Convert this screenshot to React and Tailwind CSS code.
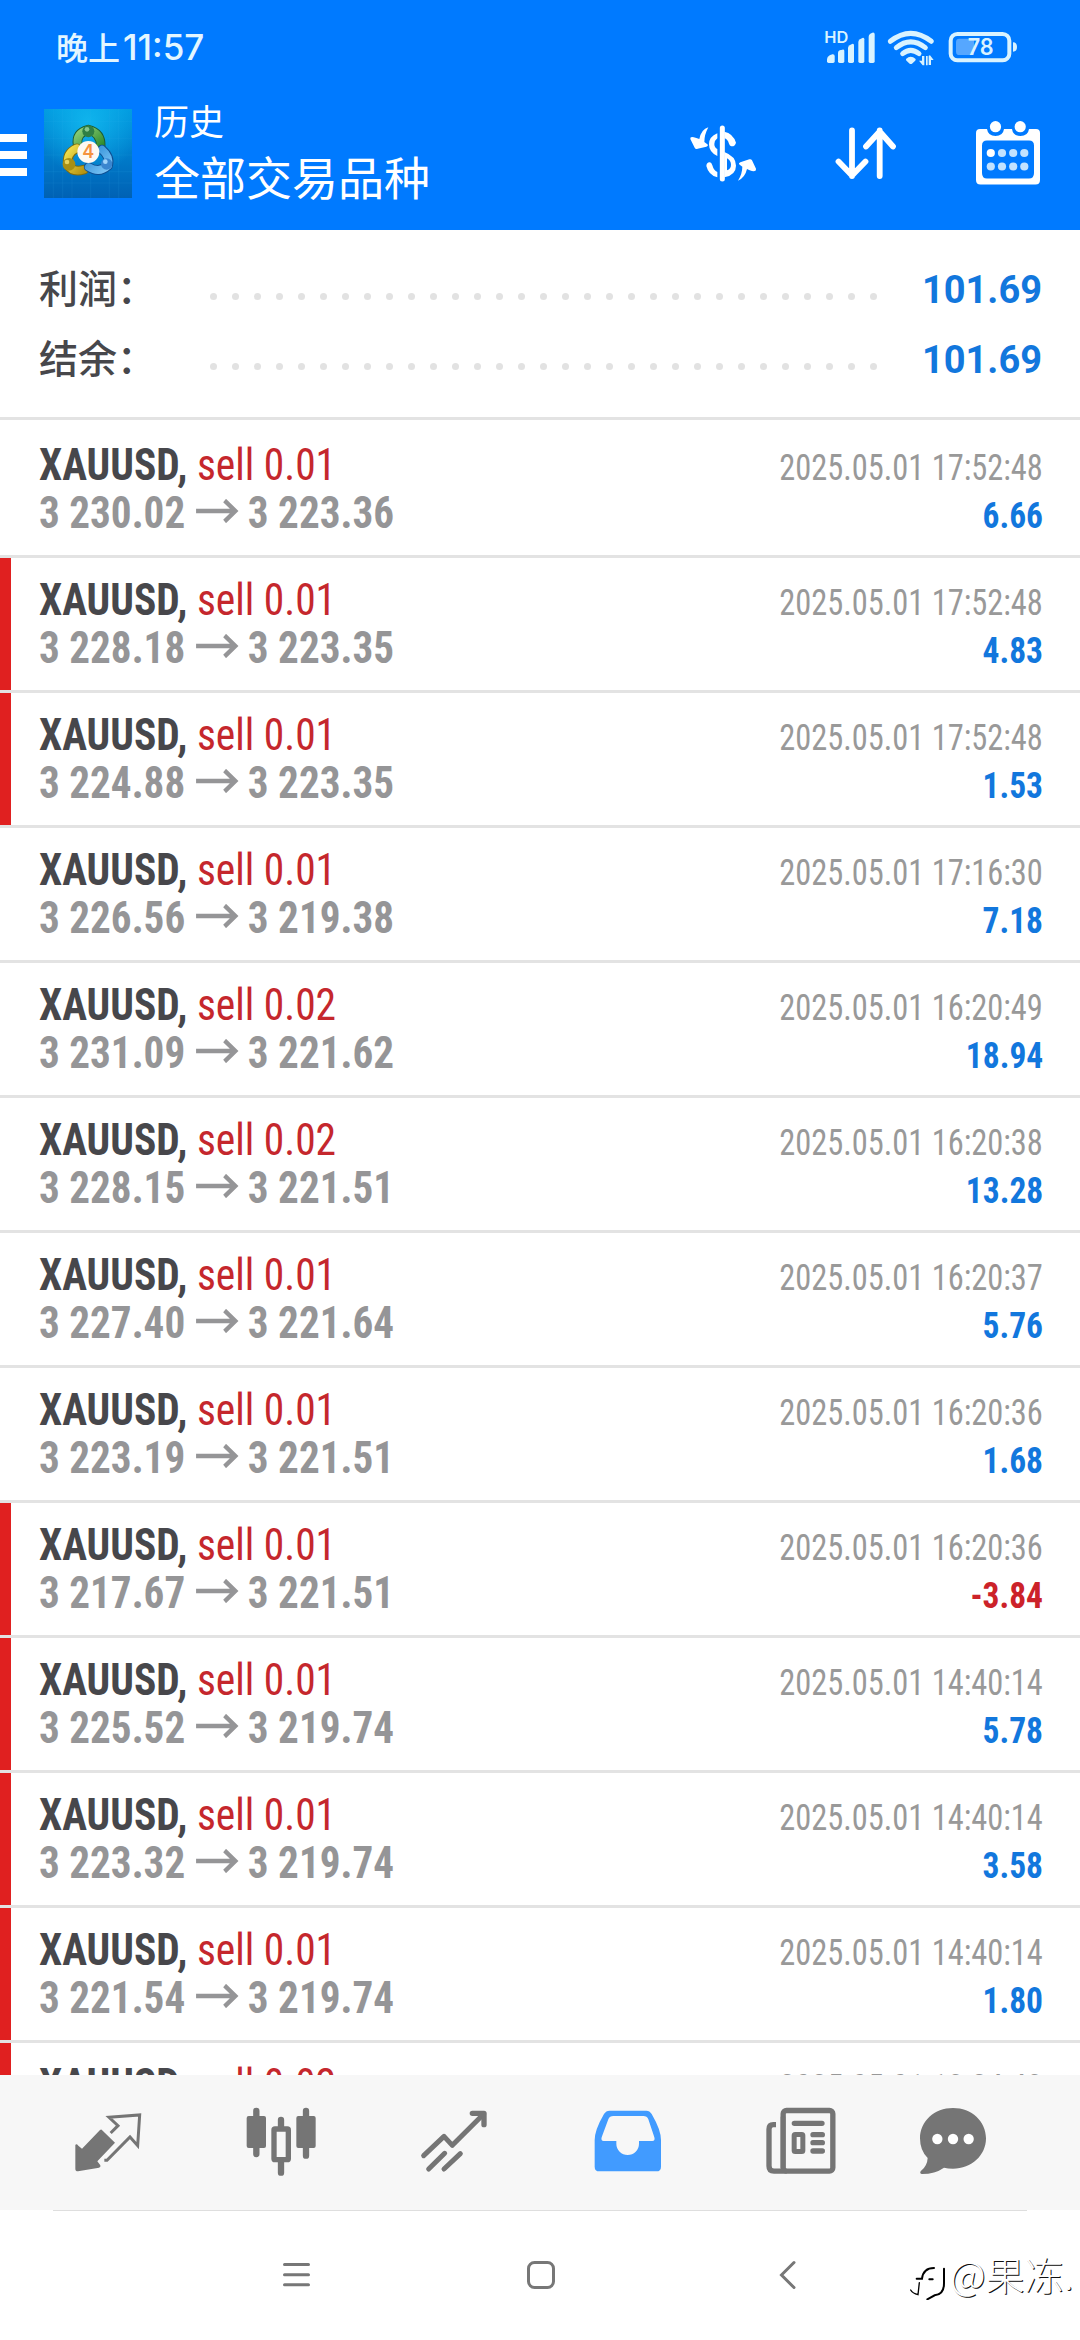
const deals = [
  { lots: '0.01', from: '3 230.02', to: '3 223.36', time: '2025.05.01 17:52:48', profit: '6.66', marked: false },
  { lots: '0.01', from: '3 228.18', to: '3 223.35', time: '2025.05.01 17:52:48', profit: '4.83', marked: true },
  { lots: '0.01', from: '3 224.88', to: '3 223.35', time: '2025.05.01 17:52:48', profit: '1.53', marked: true },
  { lots: '0.01', from: '3 226.56', to: '3 219.38', time: '2025.05.01 17:16:30', profit: '7.18', marked: false },
  { lots: '0.02', from: '3 231.09', to: '3 221.62', time: '2025.05.01 16:20:49', profit: '18.94', marked: false },
  { lots: '0.02', from: '3 228.15', to: '3 221.51', time: '2025.05.01 16:20:38', profit: '13.28', marked: false },
  { lots: '0.01', from: '3 227.40', to: '3 221.64', time: '2025.05.01 16:20:37', profit: '5.76', marked: false },
  { lots: '0.01', from: '3 223.19', to: '3 221.51', time: '2025.05.01 16:20:36', profit: '1.68', marked: false },
  { lots: '0.01', from: '3 217.67', to: '3 221.51', time: '2025.05.01 16:20:36', profit: '-3.84', marked: true },
  { lots: '0.01', from: '3 225.52', to: '3 219.74', time: '2025.05.01 14:40:14', profit: '5.78', marked: true },
  { lots: '0.01', from: '3 223.32', to: '3 219.74', time: '2025.05.01 14:40:14', profit: '3.58', marked: true },
  { lots: '0.01', from: '3 221.54', to: '3 219.74', time: '2025.05.01 14:40:14', profit: '1.80', marked: true },
  { lots: '0.02', from: '3 223.10', to: '3 219.74', time: '2025.05.01 13:24:43', profit: '6.72', marked: true },
]

function StatusIcons() {
  return (
    <svg width="210" height="55" viewBox="0 0 630 165" fill="#d9f3ff">
      <text x="28" y="69" fontFamily="Inter, sans-serif" fontWeight="600" fontSize="46" textLength="72" lengthAdjust="spacingAndGlyphs">HD</text>
      <path d="M36 118q0-8 8-12l8-3q7-1 7 5v16q0 5-5 5H41q-5 0-5-5z" />
      <path d="M69 98q0-5 5-7l8-2q6-1 6 4v31q0 5-5 5h-9q-5 0-5-5z" />
      <path d="M99 84q0-5 5-8l7-4q6-2 6 4v48q0 5-5 5h-8q-5 0-5-5z" />
      <path d="M130 66q0-5 5-8l7-4q6-2 6 4v66q0 5-5 5h-8q-5 0-5-5z" />
      <path d="M161 50q0-6 5-9l6-3q7-2 7 5v81q0 5-5 5h-8q-5 0-5-5z" />
      <g fill="none" stroke="#d9f3ff" strokeWidth="15" strokeLinecap="round">
        <path d="M226 64Q287 16 349 64" />
        <path d="M244 83Q287 48 331 83" />
        <path d="M263 101Q287 81 312 101" />
      </g>
      <path d="M273 117q14-13 29 0q1 4-3 7l-8 7q-3 2-7 0l-8-7q-4-3-3-7z" />
      <path d="M312 122h9v-14h7v28h-5zM345 106l11 14h-8v15h-7v-28zM333 108h5v28h-5z" />
      <rect x="407" y="42" width="176" height="79" rx="20" fill="none" stroke="#d9f3ff" strokeWidth="12" />
      <path d="M433 56h44v49h-44q-10 0-10-10V66q0-10 10-10z" fill="#56a7ff" />
      <text x="458" y="106" fontFamily="Inter, sans-serif" fontWeight="600" fontSize="68" textLength="78" lengthAdjust="spacingAndGlyphs">78</text>
      <path d="M594 67q12 0 12 14t-12 14z" />
    </svg>
  )
}

function AppLogo() {
  return (
    <svg className="ml-[17px]" width="88" height="89" viewBox="0 0 264 267">
      <defs>
        <linearGradient id="logoBg" x1="0" y1="0" x2="0" y2="1">
          <stop offset="0" stopColor="#0098de" />
          <stop offset="0.5" stopColor="#007dcb" />
          <stop offset="1" stopColor="#0061b4" />
        </linearGradient>
        <radialGradient id="logoGlow" cx="0.5" cy="0.15" r="0.6">
          <stop offset="0" stopColor="#14bdf2" stopOpacity="0.8" />
          <stop offset="1" stopColor="#14bdf2" stopOpacity="0" />
        </radialGradient>
        <linearGradient id="logoGreen" x1="0" y1="0" x2="1" y2="1">
          <stop offset="0" stopColor="#8fd07a" />
          <stop offset="1" stopColor="#2f8b2c" />
        </linearGradient>
        <linearGradient id="logoGold" x1="0" y1="0" x2="1" y2="1">
          <stop offset="0" stopColor="#f2e14e" />
          <stop offset="1" stopColor="#b79412" />
        </linearGradient>
        <linearGradient id="logoBlue" x1="0" y1="0" x2="1" y2="1">
          <stop offset="0" stopColor="#2b8bd6" />
          <stop offset="1" stopColor="#7cc5f5" />
        </linearGradient>
      </defs>
      <rect width="264" height="267" fill="url(#logoBg)" />
      <rect width="264" height="267" fill="url(#logoGlow)" />
      <path d="M28 0v267M56 0v267M84 0v267M140 0v267M196 0v267M224 0v267M0 38h264M0 88h264M0 138h264M0 188h264M0 222h264" stroke="#3fb4ea" strokeOpacity="0.16" strokeWidth="2" fill="none" />
      <g fill="none" strokeLinecap="round">
        <path d="M101 108Q95 72 133 62Q172 72 170 112" stroke="#1d5d34" strokeWidth="29" />
        <path d="M101 108Q95 72 133 62Q172 72 170 112" stroke="url(#logoGreen)" strokeWidth="23" />
        <path d="M98 118Q66 132 72 168Q86 192 120 182" stroke="#7d6c10" strokeWidth="29" />
        <path d="M98 118Q66 132 72 168Q86 192 120 182" stroke="url(#logoGold)" strokeWidth="23" />
        <path d="M174 122Q200 144 192 170Q166 194 134 174" stroke="#0f4f93" strokeWidth="29" />
        <path d="M174 122Q200 144 192 170Q166 194 134 174" stroke="url(#logoBlue)" strokeWidth="23" />
      </g>
      <circle cx="133" cy="67" r="18" fill="#2f7f45" />
      <circle cx="129" cy="61" r="7" fill="#86c690" />
      <circle cx="75" cy="166" r="19" fill="#a88f14" />
      <circle cx="69" cy="159" r="7" fill="#e6d35c" />
      <circle cx="188" cy="165" r="17" fill="#3a86cf" />
      <circle cx="184" cy="158" r="7" fill="#9fd4fa" />
      <circle cx="133" cy="129" r="33" fill="#fdf8f2" />
      <text x="133" y="148" textAnchor="middle" fontFamily="Inter, sans-serif" fontWeight="600" fontSize="54" fill="#f5923e">4</text>
    </svg>
  )
}

function CurrencyIcon() {
  return (
    <svg className="ml-auto" width="90" height="75" viewBox="0 0 270 225" fill="#fff">
      <path d="M124 36V189" stroke="#fff" strokeWidth="15" strokeLinecap="round" />
      <path d="M109 52V67Q100 74 100 84Q100 95 109 99V120Q84 109 84 85Q84 62 109 52z" />
      <path d="M130 47Q156 52 165 80Q162 92 151 91Q146 90 144 83Q140 69 130 67z" />
      <path fillRule="evenodd" d="M130 108Q165 121 165 149Q165 177 130 184zM138 127V163Q150 159 150 146Q150 134 138 127z" />
      <path d="M109 184Q83 178 76 150Q77 138 87 139Q92 140 94 148Q98 163 109 168z" />
      <path d="M82 34Q61 40 55 69L46 66Q26 58 28 69L41 95Q44 101 50 98L76 92Q85 88 77 83L70 78Q70 56 82 34z" />
      <path d="M171 194Q192 185 198 159L206 163Q226 170 225 158L213 133Q210 128 205 130L178 139Q170 143 177 147L184 152Q184 173 171 194z" />
    </svg>
  )
}

function SortIcon() {
  return (
    <svg className="ml-[59px]" width="72" height="60" viewBox="0 0 72 60" fill="none" stroke="#fff" strokeWidth="5.8" strokeLinecap="round" strokeLinejoin="round">
      <path d="M22 7.500V53M8.500 38.500L22 52.500L35.500 38.500" />
      <path d="M49.700 53V7.500M36 23.500L49.700 8.500L63 23.500" />
    </svg>
  )
}

function CalendarIcon() {
  const columns = [14.8, 26, 37.200, 48.300]
  return (
    <svg className="ml-[74px] mr-[40px]" width="64" height="66" viewBox="0 0 64 66" fill="#fff">
      <path fillRule="evenodd" d="M4 9H11Q12 16 19.500 16Q27 16 28 9H36Q37 16 44.500 16Q52 16 53 9H60Q64 9 64 13V60Q64 64.500 59.500 64.500H4.500Q0 64.500 0 60V13Q0 9 4 9zM11 20.500Q6 20.500 6 25.500V53Q6 58.500 11 58.500H53Q58 58.500 58 53V25.500Q58 20.500 53 20.500z" />
      <circle cx="19.500" cy="6.700" r="5.600" />
      <circle cx="44.200" cy="6.700" r="5.600" />
      {columns.map((x, i) => (
        <g key={x}>
          <circle cx={x} cy="33" r="4.100" fill={i === 0 ? '#fff' : '#c2e2ff'} />
          <circle cx={x} cy="46.500" r="4.100" fill="#c2e2ff" />
        </g>
      ))}
    </svg>
  )
}

function Header() {
  return (
    <header className="h-[230px] shrink-0 bg-[#007aff] text-white">
      <div className="flex h-[88px] items-start justify-between pt-5 pl-[56px] pr-[55px]">
        <span className="mt-[2px] font-['Noto_Sans_CJK_SC',sans-serif] text-[32px] leading-[48px] font-medium text-[#e3f6ff]">
          晚上<span className="ml-[3px] font-[Inter] text-[35px]">11:57</span>
        </span>
        <StatusIcons />
      </div>
      <div className="flex h-[130px] items-center">
        <div className="mt-[4px] flex w-[27px] flex-col gap-[9px]">
          <i className="h-2 bg-white" />
          <i className="h-2 bg-white" />
          <i className="h-2 bg-white" />
        </div>
        <AppLogo />
        <div className="mb-[4px] ml-[22px] font-['Noto_Sans_CJK_SC',sans-serif]">
          <p className="text-[35px] leading-[48px]">历史</p>
          <h1 className="text-[46px] leading-[63px]">全部交易品种</h1>
        </div>
        <CurrencyIcon />
        <SortIcon />
        <CalendarIcon />
      </div>
    </header>
  )
}

function SummaryRow({ label, value }) {
  return (
    <div className="flex h-[70px] items-center pl-[39px] pr-[38px]">
      <span className="mb-[5px] w-[171px] font-['Noto_Sans_CJK_SC',sans-serif] text-[39px] font-medium text-[#47474b]">{label}</span>
      <span className="mt-[14px] flex w-[667px] justify-between">
        {Array.from({ length: 31 }, (_, i) => (
          <i key={i} className="size-[7px] rounded-full bg-[#e2e2e2]" />
        ))}
      </span>
      <span className="mt-[2px] ml-auto font-[Roboto] text-[38px] font-bold text-[#1277dd]">{value}</span>
    </div>
  )
}

function Deal({ deal, first }) {
  const loss = deal.profit.startsWith('-')
  return (
    <li className={first ? 'flex h-[135px] shrink-0 border-t-[3px] border-transparent' : 'flex h-[135px] shrink-0 border-t-[3px] border-[#e3e3e3]'}>
      <div className={deal.marked ? 'w-[11px] bg-[#e02020]' : 'w-[11px]'} />
      <div className="flex-1 pt-[18px] pl-7 pr-[37px] font-['Roboto_Condensed'] leading-[48px]">
        <div className="flex h-12 items-baseline justify-between">
          <span className="origin-left scale-x-[0.942] text-[44px] text-[#c5272d]">
            <b className="text-[#47474b]">XAUUSD,</b> sell {deal.lots}
          </span>
          <span className="origin-right scale-x-[0.9] text-[36px] text-[#999]">{deal.time}</span>
        </div>
        <div className="flex h-12 items-baseline justify-between font-bold">
          <span className="flex origin-left scale-x-[0.935] items-baseline text-[44px] text-[#959597]">
            {deal.from}
            <svg className="mr-[9px] mb-[5px] ml-[12px] self-center" width="46" height="24" viewBox="0 0 46 24" fill="none" stroke="currentColor" strokeWidth="4.5">
              <path d="M0 12H42M30.500 1.500L42 12L30.500 22.500" />
            </svg>
            {deal.to}
          </span>
          <span className={loss ? 'origin-right scale-x-[0.93] text-[36px] text-[#cc2229]' : 'origin-right scale-x-[0.93] text-[36px] text-[#1277dd]'}>{deal.profit}</span>
        </div>
      </div>
    </li>
  )
}

function TabBar() {
  return (
    <nav className="flex h-[135px] shrink-0 items-start bg-[#f7f7f7] pt-[26px] pl-[68px] text-[#757575]">
      {/* quotes */}
      <svg width="80" height="80" viewBox="205 303 240 240" fill="currentColor">
        <path d="M306 389L346 428L293 484L302 496Q304 502 298 503L235 514Q227 514 227 506V435Q230 430 236 437L247 446L301 390Q304 387 306 389z" />
        <path d="M333 399L355 377L328 352L420 345L414 437L391 411L322 481H314" fill="none" stroke="currentColor" strokeWidth="9" />
      </svg>
      {/* charts */}
      <svg className="ml-[93px]" width="80" height="80" viewBox="723 303 240 240" fill="currentColor">
        <path d="M769 333V462M918 333V467M843 360V386M843 482V518" stroke="currentColor" strokeWidth="19" strokeLinecap="round" />
        <rect x="740" y="348" width="58" height="96" rx="6" />
        <rect x="889" y="348" width="58" height="96" rx="6" />
        <rect x="822" y="387" width="43" height="92" rx="3" fill="#f7f7f7" stroke="currentColor" strokeWidth="16" />
      </svg>
      {/* trade */}
      <svg className="ml-[93px]" width="80" height="80" viewBox="102 303 240 240" fill="none" stroke="currentColor" strokeWidth="15" strokeLinecap="round" strokeLinejoin="round">
        <path d="M131 467L192 409L217 436L311 342" />
        <path d="M277 340H312V374" strokeWidth="16" />
        <path d="M146 507L194 460M192 507L241 461" />
      </svg>
      {/* history, the current tab */}
      <svg className="ml-[94px] text-[#419bff]" width="80" height="80" viewBox="623 303 240 240" fill="currentColor">
        <path fillRule="evenodd" d="M688 332H798Q808 332 814 342Q842 390 842 420V500Q842 514 828 514H657Q643 514 643 500V420Q643 390 671 342Q677 332 688 332zM699 348Q688 348 684 358L664 412Q661 423 670 423H708V431A34 34 0 0 0 776 431V423H816Q825 423 822 412L804 358Q800 348 789 348z" />
      </svg>
      {/* news */}
      <svg className="ml-[93px]" width="80" height="80" viewBox="123 303 240 240" fill="none" stroke="currentColor">
        <rect x="189.500" y="331.500" width="149" height="182" rx="10" strokeWidth="16" />
        <path d="M168 374H160Q147 374 147 388V498Q147 513.500 162 513.500H200" strokeWidth="16" />
        <path d="M189 350V505" strokeWidth="14" />
        <path d="M223 370H306M279 404H307M279 428H307M279 453H307" strokeWidth="16" strokeLinecap="round" />
        <rect x="222.500" y="403.500" width="26" height="51" rx="3" strokeWidth="15" />
      </svg>
      {/* messages */}
      <svg className="ml-[72px]" width="80" height="80" viewBox="579 303 240 240" fill="currentColor">
        <path d="M699 324C755 324 798 364 798 415S755 506 699 506Q684 506 672 503Q645 522 606 522Q598 521 602 514Q622 498 623 474Q600 452 600 415C600 364 643 324 699 324z" />
        <circle cx="652" cy="417" r="15.500" fill="#fff" />
        <circle cx="699" cy="417" r="15.500" fill="#fff" />
        <circle cx="746" cy="417" r="15.500" fill="#fff" />
      </svg>
    </nav>
  )
}

function SystemNav() {
  return (
    <div className="h-[130px] shrink-0 bg-white">
      <div className="mx-[53px] h-px bg-[#dedede]" />
      <div className="flex items-center pt-[49px] pl-[282px] text-[#777]">
        <svg width="29" height="30" viewBox="0 0 29 30" stroke="currentColor" strokeWidth="3" strokeLinecap="round">
          <path d="M2.500 4.500H26.500M2.500 14.700H26.500M2.500 24.700H26.500" />
        </svg>
        <svg className="ml-[215px]" width="30" height="30" viewBox="0 0 30 30" fill="none" stroke="currentColor" strokeWidth="3">
          <rect x="2.500" y="2.500" width="25" height="25" rx="6" />
        </svg>
        <svg className="ml-[223px]" width="18" height="30" viewBox="0 0 18 30" fill="none" stroke="currentColor" strokeWidth="3" strokeLinecap="round">
          <path d="M15 2.500L2.500 15L15 27.500" />
        </svg>
      </div>
    </div>
  )
}

function Watermark() {
  return (
    <div className="absolute top-[2246px] left-[908px] flex items-center">
      <svg width="38" height="54" viewBox="0 0 114 162" fill="none" stroke="#000" strokeLinecap="round">
        <path d="M8 132Q14 142 30 146L34 110" strokeWidth="4" />
        <path d="M26 98H42Q46 66 78 66" strokeWidth="6" />
        <path d="M64 100H74" strokeWidth="6" />
        <path d="M108 68V112Q108 146 80 148L58 160" strokeWidth="6" />
      </svg>
      <span className="ml-[4px] font-['Noto_Sans_CJK_SC',sans-serif] text-[39px] leading-[54px] font-light whitespace-nowrap text-white [text-shadow:1px_1px_0.5px_#111]">@果冻.</span>
    </div>
  )
}

export default function App() {
  return (
    <div className="relative flex h-[2340px] w-[1080px] flex-col overflow-hidden bg-white">
      <Header />
      <section className="h-[190px] shrink-0 border-b-[3px] border-[#e3e3e3] pt-6">
        <SummaryRow label="利润：" value="101.69" />
        <SummaryRow label="结余：" value="101.69" />
      </section>
      <ul className="flex min-h-0 flex-1 flex-col overflow-hidden">
        {deals.map((deal, i) => (
          <Deal key={i} deal={deal} first={i === 0} />
        ))}
      </ul>
      <TabBar />
      <SystemNav />
      <Watermark />
    </div>
  )
}
